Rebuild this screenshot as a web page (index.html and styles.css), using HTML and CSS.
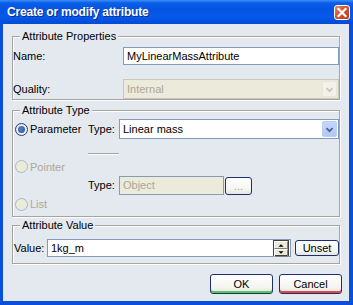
FILE: index.html
```html
<!DOCTYPE html>
<html>
<head>
<meta charset="utf-8">
<link rel="stylesheet" href="styles.css">
</head>
<body>
<div class="window">
  <div class="titlebar">
    <span class="title">Create or modify attribute</span>
    <span class="close">
      <svg width="14" height="13" viewBox="0 0 14 13"><path d="M3.5 3 L10.5 10 M10.5 3 L3.5 10" stroke="#fff" stroke-width="2.2" stroke-linecap="square"/></svg>
    </span>
  </div>
  <div class="client">
    <fieldset class="group">
      <legend>Attribute Properties</legend>
      <div class="prop-row name-row">
        <label>Name:</label>
        <div class="edit">MyLinearMassAttribute</div>
      </div>
      <div class="prop-row quality-row">
        <label>Quality:</label>
        <div class="combo disabled">
          <span class="combo-text">Internal</span>
          <span class="drop"><svg width="15" height="16" viewBox="0 0 15 16"><path d="M4 7 L7.5 10.5 L11 7" fill="none" stroke="#c9c7ba" stroke-width="2"/></svg></span>
        </div>
      </div>
    </fieldset>

    <fieldset class="group type-group">
      <legend>Attribute Type</legend>
      <div class="type-grid">
        <div class="radio checked r1"><span class="dot"></span>Parameter</div>
        <div class="type-label r1">Type:</div>
        <div class="combo r1">
          <span class="combo-text">Linear mass</span>
          <span class="drop"><svg width="15" height="16" viewBox="0 0 15 16"><path d="M4 7 L7.5 10.5 L11 7" fill="none" stroke="#4d6185" stroke-width="2"/></svg></span>
        </div>
        <div class="sep"></div>
        <div class="radio off r3"><span class="dot"></span>Pointer</div>
        <div class="type-label r4">Type:</div>
        <div class="object-row r4">
          <div class="edit disabled object-field">Object</div>
          <button class="xpbtn dots">...</button>
        </div>
        <div class="radio off r5"><span class="dot"></span>List</div>
      </div>
    </fieldset>

    <fieldset class="group value-group">
      <legend>Attribute Value</legend>
      <div class="value-row">
        <label>Value:</label>
        <div class="edit spin-edit">
          <span class="value-text">1kg_m</span>
          <span class="spin">
            <span class="spin-btn"><svg width="14" height="6" viewBox="0 0 14 6"><path d="M4 5 L7 2 L10 5 Z" fill="#000"/></svg></span>
            <span class="spin-btn"><svg width="14" height="6" viewBox="0 0 14 6"><path d="M4 1 L7 4 L10 1 Z" fill="#000"/></svg></span>
          </span>
        </div>
        <button class="xpbtn unset">Unset</button>
      </div>
    </fieldset>

    <div class="buttons">
      <button class="xpbtn big ok">OK</button>
      <button class="xpbtn big cancel">Cancel</button>
    </div>
  </div>
</div>
</body>
</html>
```

FILE: styles.css
```css
* {
  box-sizing: border-box;
}
html, body {
  margin: 0;
  background: #fff;
}
body {
  font-family: "Liberation Sans", Arial, sans-serif;
  font-size: 11px;
  color: #000;
}

.window {
  width: 353px;
  height: 305px;
  display: flex;
  flex-direction: column;
}

/* title bar */
.titlebar {
  height: 24px;
  flex: none;
  display: flex;
  align-items: center;
  justify-content: space-between;
  padding: 0 3px 0 7px;
  background: linear-gradient(#3d8ef8 0, #0a5ee8 3px, #0454e2 9px, #0659ea 17px, #024ad6 24px);
}
.title {
  color: #fff;
  font-weight: bold;
  font-size: 12px;
  letter-spacing: -0.2px;
  text-shadow: 1px 1px 0 #0a2a90;
}
.close {
  width: 16px;
  height: 15px;
  border: 1px solid #fff;
  border-radius: 3px;
  background: linear-gradient(135deg, #e88a6a 0, #d6512c 45%, #c23a18 100%);
  display: flex;
  align-items: center;
  justify-content: center;
  margin-top: 1px;
}

/* client area */
.client {
  flex: 1;
  background: #e3e9ef;
  border: solid #0a4fdc;
  border-width: 0 4px 4px 3px;
  padding: 6px 7px 0 9px;
  display: flex;
  flex-direction: column;
}

.group {
  margin: 0 2px 0 0;
  padding: 0;
  min-width: 0;
  border: 1px solid #a5a5a0;
  box-shadow: inset 1px 1px 0 #fff, 1px 1px 0 #fff;
}
.group legend {
  margin-left: 7px;
  padding: 0 2px;
  line-height: 12px;
  background: #e3e9ef;
}
.type-group {
  margin-top: 4px;
}
.value-group {
  margin-top: 2px;
}

/* properties */
.prop-row {
  display: flex;
  align-items: center;
}
.prop-row label {
  width: 110px;
}
.name-row {
  margin-top: 5px;
}
.quality-row {
  margin-top: 14px;
}

.edit {
  height: 18px;
  border: 1px solid #7f9db9;
  background: #fff;
  padding: 0 3px;
  line-height: 16px;
  flex: 1;
  white-space: nowrap;
}
.edit.disabled {
  background: #ebeadb;
  color: #aca899;
}

.combo {
  height: 20px;
  flex: 1;
  display: flex;
  align-items: center;
  border: 1px solid #7f9db9;
  background: #fff;
  padding: 1px;
}
.combo-text {
  flex: 1;
  padding-left: 2px;
}
.drop {
  width: 15px;
  height: 16px;
  border-radius: 2px;
  border: 1px solid #b9cdf8;
  background: linear-gradient(#c6d7fc, #b2c6f5);
  display: flex;
  align-items: center;
  justify-content: center;
}
.drop svg {
  display: block;
}
.combo.disabled {
  border-color: #c9c7ba;
  background: #ebeadb;
  color: #aca899;
}
.combo.disabled .drop {
  border-color: #e8e6dc;
  background: #f2f1ea;
}

/* attribute type grid */
.type-grid {
  display: grid;
  grid-template-columns: 75px 31px 220px;
  grid-template-rows: 20px 21px 13px 22px 18px;
  margin: 3px 0 3px 0;
}
.r1 { grid-row: 1; }
.r3 { grid-row: 3; grid-column: 1; }
.r4 { grid-row: 4; }
.r5 { grid-row: 5; grid-column: 1; }
.type-label {
  grid-column: 2;
  align-self: center;
}
.type-label.r4 {
  align-self: end;
  line-height: 19px;
}
.combo.r1 {
  grid-column: 3;
}
.sep {
  grid-row: 2;
  grid-column: 2;
  align-self: end;
  height: 2px;
  margin-bottom: 5px;
  border-top: 1px solid #a5a5a0;
  border-bottom: 1px solid #fff;
}
.object-row {
  grid-column: 3;
  align-self: end;
  display: flex;
  align-items: center;
}
.object-field {
  flex: none;
  width: 105px;
  height: 19px;
  line-height: 17px;
}

.radio {
  display: flex;
  align-items: center;
  padding-left: 2px;
}
.radio .dot {
  width: 13px;
  height: 13px;
  border-radius: 50%;
  margin-right: 2px;
  display: flex;
  align-items: center;
  justify-content: center;
}
.radio.checked .dot {
  border: 1px solid #1c3f80;
  background: radial-gradient(circle at 60% 60%, #fff 0, #dcdfe8 100%);
}
.radio.checked .dot::after {
  content: "";
  width: 7px;
  height: 7px;
  border-radius: 50%;
  background: radial-gradient(circle at 40% 40%, #5a80c8 0, #2a4f9c 100%);
}
.radio.off {
  color: #aca899;
}
.radio.off .dot {
  border: 1px solid #a8b8c8;
  background: #ecead8;
}

/* buttons */
.xpbtn {
  font-family: "Liberation Sans", Arial, sans-serif;
  font-size: 11px;
  color: #000;
  border: 1px solid #1c2f6e;
  border-radius: 3px;
  background: linear-gradient(#ffffff 0, #f4f4f0 70%, #e6e5dd 100%);
  padding: 0;
  margin: 0;
}
.dots {
  width: 27px;
  height: 18px;
  margin-left: 1px;
  color: #aca899;
  line-height: 14px;
}
.big {
  width: 63px;
  height: 20px;
}
.ok {
  box-shadow: inset 0 -2px 0 #55c855;
}
.cancel {
  box-shadow: inset 0 -2px 0 #e04848;
}
.buttons {
  display: flex;
  justify-content: flex-end;
  gap: 6px;
  margin-top: 10px;
}

/* value row */
.value-row {
  display: flex;
  align-items: center;
  margin: 8px 0 6px 1px;
}
.value-row label {
  width: 33px;
}
.spin-edit {
  flex: none;
  width: 244px;
  display: flex;
  align-items: center;
  padding: 0 1px 0 3px;
}
.value-text {
  flex: 1;
}
.spin {
  width: 16px;
  height: 16px;
  display: flex;
  flex-direction: column;
  border: 1px solid #404040;
  background: #ece9d8;
}
.spin-btn {
  flex: 1;
  display: flex;
  align-items: center;
  justify-content: center;
  border-top: 1px solid #fff;
  border-left: 1px solid #fff;
  border-bottom: 1px solid #808080;
  border-right: 1px solid #808080;
}
.spin-btn svg {
  display: block;
}
.unset {
  margin-left: 4px;
  width: 44px;
  height: 16px;
}
```
